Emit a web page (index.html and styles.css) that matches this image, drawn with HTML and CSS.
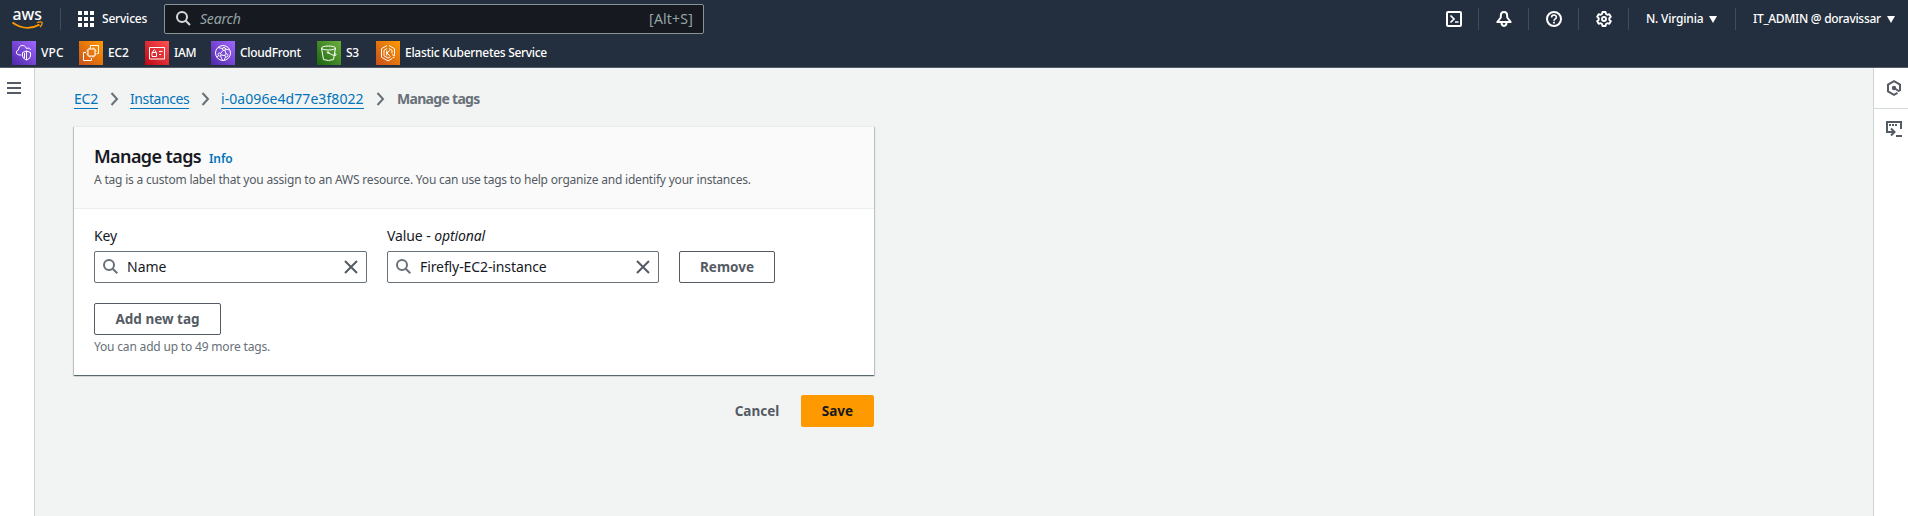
FILE: index.html
```html
<!DOCTYPE html>
<html lang="en">
<head>
<meta charset="utf-8">
<title>Manage tags | EC2</title>
<link rel="stylesheet" href="styles.css">
</head>
<body>
<header class="header">
  <div class="topbar">
    <svg class="logo" width="32" height="22" viewBox="0 0 32 22"><text class="logo-text" x="0.5" y="11" textLength="29.5" lengthAdjust="spacingAndGlyphs">aws</text><path d="M.5 13.500C9 19.800 19 20.300 27.500 15.600" fill="none" stroke="#f90" stroke-width="1.800"/><path d="M25 13.800c2-1.200 4.500-1 5-.4s-.3 3.200-2 4.700" fill="none" stroke="#f90" stroke-width="1.300"/></svg>
    <span class="rule rule-logo"></span>
    <svg class="grid-icon" width="16" height="16" viewBox="0 0 16 16" fill="#fff"><path d="M0 0h4v4H0zM6 0h4v4H6zM12 0h4v4h-4zM0 6h4v4H0zM6 6h4v4H6zM12 6h4v4h-4zM0 12h4v4H0zM6 12h4v4H6zM12 12h4v4h-4z"/></svg>
    <span class="services">Services</span>
    <div class="search">
      <svg width="16" height="16" viewBox="0 0 16 16" fill="none" stroke="#d5dbdb" stroke-width="2"><circle cx="6" cy="6" r="5"/><path d="M9.700 9.700L14 14"/></svg>
      <span class="search-text">Search</span>
      <span class="shortcut">[Alt+S]</span>
    </div>
    <div class="tools">
      <span class="tool"><svg width="16" height="16" viewBox="0 0 16 16" fill="none" stroke="#fff" stroke-width="2"><rect x="1" y="1" width="14" height="14" rx="1"/><path d="M4.500 4.500L8 8l-3.500 3.500M9 11h3.500" stroke-width="1.700"/></svg></span>
      <span class="tool"><svg width="16" height="16" viewBox="0 0 16 16" fill="none" stroke="#fff" stroke-width="2" stroke-linejoin="round"><path d="M8 1C5.800 1 4.800 2.800 4.800 5v1.500L1.300 11h13.400l-3.500-4.500V5C11.200 2.800 10.200 1 8 1zM5.500 11.500C5.500 16 10.500 16 10.500 11.500"/></svg></span>
      <span class="tool"><svg width="16" height="16" viewBox="0 0 16 16" fill="none" stroke="#fff" stroke-width="2"><circle cx="8" cy="8" r="7"/><path d="M5.600 6.400C5.600 3.200 10.400 3.200 10.400 6.200 10.400 8 8 7.800 8 9.800" stroke-width="1.600"/><path d="M8 10.800v1.800" stroke-width="1.800"/></svg></span>
      <span class="tool"><svg width="16" height="16" viewBox="0 0 16 16" fill="none" stroke="#fff" stroke-width="1.900" stroke-linejoin="round"><path d="M6.500 1h3l.5 2 1.300.8 2-.6 1.500 2.600L13.300 7.200v1.600l1.500 1.400-1.500 2.600-2-.6L10 13l-.5 2h-3L6 13l-1.300-.8-2 .6-1.500-2.600 1.500-1.400V7.200L1.200 5.800l1.500-2.600 2 .6L6 3z"/><circle cx="8" cy="8" r="2"/></svg></span>
      <span class="menu menu-region"><span class="region">N. Virginia</span><i class="caret"></i></span>
      <span class="menu menu-account"><span class="account">IT_ADMIN @ doravissar</span><i class="caret"></i></span>
    </div>
  </div>
  <nav class="favorites">
    <a class="fav fav-vpc"><svg class="tile purple" viewBox="0 0 24 24"><path d="M9.500 14H8C3.500 14 3.500 9.500 6.500 9 6.500 3.500 13 3 14.500 7.500 17 6.500 18.500 7.500 18.500 9M14.500 10l4 1.500v3.500q0 2.500-4 4-4-1.500-4-4v-3.500zM14.500 10v9M12.500 12v5"/></svg><span>VPC</span></a>
    <a class="fav fav-ec2"><svg class="tile orange" viewBox="0 0 24 24"><path d="M9 8h7v7H9zM11 8V6.500M14 8V6.500M11 16.500V15M14 16.500V15M7.500 10H9M7.500 13H9M16 10h1.500M16 13h1.500M11.500 7V4.500h8v8H18M7 11.500H4.500v8h8V17"/></svg><span>EC2</span></a>
    <a class="fav fav-iam"><svg class="tile red" viewBox="0 0 24 24"><path d="M4.500 6.500h15v11.500h-15zM7 11.500h4.500v4H7zM8 11.500V10q1.300-2.500 2.600 0v1.500M14 10.500h3.500M14 13.500h2"/></svg><span>IAM</span></a>
    <a class="fav fav-cf"><svg class="tile purple" viewBox="0 0 24 24"><circle cx="12" cy="12" r="7.500"/><circle cx="13" cy="8" r="1.500"/><circle cx="8.500" cy="13.500" r="1.500"/><circle cx="15.500" cy="14.500" r="1.500"/><path d="M12 9.500l-2.500 3M14 9.300l1.200 3.700M10 14l4 .5M7 6.500l4.500 1M14.500 8l4 1M6 16.500l1.500-2M9.500 15l2 4.300M14.500 16l-1.500 3.500"/></svg><span>CloudFront</span></a>
    <a class="fav fav-s3"><svg class="tile green" viewBox="0 0 24 24"><ellipse cx="11.500" cy="7" rx="7" ry="2"/><path d="M4.500 7l2 11.500q5 2 10 0L18.500 7M11 11.500q4 3 7.500 3 2-.7-1-2.500"/><circle cx="11" cy="11.500" r=".8"/></svg><span>S3</span></a>
    <a class="fav fav-eks"><svg class="tile orange" viewBox="0 0 24 24"><path d="M11 4.500L5.500 7.700v8.500l6.500 3.700 4-2.300M13 4.500l5.500 3.200v7L16 13.500M11 7.500L8 9.200v5.600l4 2.300 2.500-1.500M13 7.500l3 1.700v3M10.700 9.500v5M13.800 9.500l-3 2.500 3 2.800M16.500 17l2-1"/></svg><span>Elastic Kubernetes Service</span></a>
  </nav>
</header>
<div class="shell">
  <aside class="side-nav"><svg width="14" height="12" viewBox="0 0 14 12" fill="#545b64"><path d="M0 0h14v2H0zM0 5h14v2H0zM0 10h14v2H0z"/></svg></aside>
  <main class="content">
    <nav class="crumbs">
      <a class="crumb c1">EC2</a>
      <svg class="chev" viewBox="0 0 9 14"><path d="M1.500 1l5.500 6-5.500 6"/></svg>
      <a class="crumb c2">Instances</a>
      <svg class="chev" viewBox="0 0 9 14"><path d="M1.500 1l5.500 6-5.500 6"/></svg>
      <a class="crumb c3">i-0a096e4d77e3f8022</a>
      <svg class="chev" viewBox="0 0 9 14"><path d="M1.500 1l5.500 6-5.500 6"/></svg>
      <span class="here">Manage tags</span>
    </nav>
    <section class="card">
      <div class="card-head">
        <div class="title-row"><h1 class="title">Manage tags</h1><a class="info">Info</a></div>
        <p class="desc">A tag is a custom label that you assign to an AWS resource. You can use tags to help organize and identify your instances.</p>
      </div>
      <div class="card-body">
        <div class="tag-row">
          <div class="field">
            <label class="label">Key</label>
            <div class="input"><svg width="16" height="16" viewBox="0 0 16 16"><circle cx="6" cy="6" r="5"/><path d="M9.700 9.700L14.300 14.300"/></svg><span class="value v-key">Name</span><svg class="clear" width="14" height="14" viewBox="0 0 14 14"><path d="M1 1l12 12M13 1L1 13"/></svg></div>
          </div>
          <div class="field">
            <label class="label v-label">Value - <em>optional</em></label>
            <div class="input"><svg width="16" height="16" viewBox="0 0 16 16"><circle cx="6" cy="6" r="5"/><path d="M9.700 9.700L14.300 14.300"/></svg><span class="value v-val">Firefly-EC2-instance</span><svg class="clear" width="14" height="14" viewBox="0 0 14 14"><path d="M1 1l12 12M13 1L1 13"/></svg></div>
          </div>
          <button class="btn remove">Remove</button>
        </div>
        <button class="btn add">Add new tag</button>
        <p class="hint">You can add up to 49 more tags.</p>
      </div>
    </section>
    <div class="actions"><button class="btn cancel">Cancel</button><button class="btn save">Save</button></div>
  </main>
  <aside class="tools-panel">
    <div class="panel-item"><svg width="16" height="16" viewBox="0 0 16 16" fill="none" stroke="#545b64" stroke-width="2"><path d="M14 11V4.500L8 1.200 2 4.500v7l6 3.300 3.500-2M8 8l5.500 3.500"/><circle cx="8" cy="8" r="1.200" fill="#545b64"/></svg></div>
    <div class="panel-item shell-item"><svg width="16" height="16" viewBox="0 0 16 16" fill="none" stroke="#545b64" stroke-width="2"><path d="M15 8V1H1v10h7M5 7.500L8.500 11 5 14.500M10 15h6"/><path d="M3 4h2M6 4h2M9 4h2"/></svg></div>
  </aside>
</div>
</body>
</html>
```
FILE: styles.css
```css
* { box-sizing: border-box; }
body { margin: 0; height: 516px; overflow: hidden; display: flex; flex-direction: column; background: #f2f3f3; color: #16191f; font: 14px/22px "Noto Sans", "Open Sans", sans-serif; }
svg { display: block; flex: none; }
h1, p { margin: 0; }
button { font: inherit; }

.header { flex: none; height: 68px; background: #232f3e; border-bottom: 1px solid #545b64; color: #fff; font-size: 12px; font-weight: 500; }
.topbar { height: 38px; display: flex; align-items: center; white-space: nowrap; }
.logo { margin: 1px 0 0 12px; overflow: visible; }
.logo-text { font: 500 16px "Noto Sans", sans-serif; fill: #fff; }
.rule { width: 1px; height: 22px; background: #414d5c; }
.rule-logo { margin-left: 16px; }
.grid-icon { margin-left: 17px; }
.services { width: 54px; margin-left: 8px; letter-spacing: -.2px; }
.search { width: 540px; height: 30px; margin-left: 8px; padding: 0 10px 0 11px; display: flex; align-items: center; background: #161920; border: 1px solid #879596; border-radius: 2px; font-size: 14px; font-weight: 400; color: #95a5a6; }
.search-text { margin-left: 8px; font-style: italic; letter-spacing: -.2px; }
.shortcut { margin-left: auto; letter-spacing: .2px; }
.tools { margin-left: auto; display: flex; align-items: center; }
.tool { width: 50px; height: 22px; padding-right: 16px; display: flex; align-items: center; justify-content: flex-end; border-right: 1px solid #414d5c; }
.menu { height: 22px; display: flex; align-items: center; justify-content: space-between; }
.menu-region { width: 107px; padding: 0 18px 0 17px; border-right: 1px solid #414d5c; }
.menu-account { width: 172px; padding: 0 13px 0 17px; }
.region { letter-spacing: -.2px; }
.account { letter-spacing: -.3px; }
.caret { border: 4px solid transparent; border-top: 7px solid #fff; border-bottom: 0; }
.favorites { display: flex; padding: 3px 0 0 12px; }
.fav { height: 24px; display: flex; align-items: center; gap: 5px; white-space: nowrap; letter-spacing: -.3px; }
.fav-vpc { width: 67px; letter-spacing: .1px; }
.fav-ec2, .fav-iam { width: 66px; }
.fav-ec2 { letter-spacing: -.1px; }
.fav-cf { width: 106px; }
.fav-s3 { width: 59px; }
.tile { width: 24px; height: 24px; fill: none; stroke: #fff; stroke-width: 1; }
.purple { background: linear-gradient(45deg, #4d27a8, #a166ff); }
.orange { background: linear-gradient(45deg, #c8511b, #f90); }
.red { background: linear-gradient(45deg, #bd0816, #ff5252); }
.green { background: linear-gradient(45deg, #1b660f, #6cae3e); }

.shell { flex: 1; display: flex; min-height: 0; }
.side-nav { width: 35px; padding: 14px 0 0 7px; background: #fff; border-right: 1px solid #d0d4d5; }
.content { flex: 1; padding: 20px 0 0 39px; }
.crumbs { display: flex; align-items: flex-start; height: 22px; white-space: nowrap; }
.crumb { height: 21px; color: #0073bb; border-bottom: 1px solid #0073bb; }
.c1 { width: 24px; letter-spacing: -.2px; }
.c2 { width: 59px; letter-spacing: -.4px; }
.c3 { width: 143px; letter-spacing: .07px; }
.chev { width: 9px; height: 14px; margin: 4px 11px 0 12px; fill: none; stroke: #687078; stroke-width: 2; }
.here { margin-left: 1px; color: #687078; font-weight: 700; letter-spacing: -.7px; }
.card { width: 800px; height: 249px; margin-top: 16px; background: #fff; border-top: 1px solid #eaeded; box-shadow: 0 1px 1px 0 rgba(0,28,36,.5), 1px 1px 1px 0 rgba(0,28,36,.15), -1px 1px 1px 0 rgba(0,28,36,.15); }
.card-head { height: 82px; padding: 18px 20px 0; background: #fafafa; border-bottom: 1px solid #eaeded; white-space: nowrap; }
.title-row { display: flex; align-items: baseline; height: 22px; }
.title { width: 115px; font-size: 18px; line-height: 22px; font-weight: 600; letter-spacing: -.6px; }
.info { color: #0073bb; font-size: 12px; font-weight: 600; letter-spacing: -.1px; }
.desc { margin-top: 2px; font-size: 12px; color: #545b64; letter-spacing: -.2px; }
.card-body { padding: 16px 20px; }
.tag-row { display: flex; gap: 20px; align-items: flex-end; }
.field { width: 273px; }
.field + .field { width: 272px; }
.label { display: block; height: 26px; white-space: pre; letter-spacing: -.1px; }
.input { height: 32px; display: flex; align-items: center; padding: 0 8px; border: 1px solid #687078; border-radius: 2px; }
.input svg { fill: none; stroke: #687078; stroke-width: 2; }
.value { margin-left: 8px; }
.v-val { letter-spacing: -.1px; }
.clear { margin-left: auto; }
.input .clear { stroke: #545b64; }
.btn { display: block; height: 32px; padding: 0; background: #fff; border: 1px solid #545b64; border-radius: 2px; color: #545b64; font-size: 13.500px; font-weight: 700; line-height: 22px; letter-spacing: 0; }
.remove { width: 96px; }
.add { width: 127px; margin-top: 20px; }
.hint { margin-top: 1px; font-size: 12px; color: #687078; letter-spacing: -.18px; }
.actions { width: 800px; margin-top: 20px; display: flex; justify-content: flex-end; }
.cancel { width: 88px; background: none; border-color: transparent; }
.save { width: 73px; background: #f90; border-color: #f90; color: #16191f; }
.tools-panel { width: 35px; background: #fff; border-left: 1px solid #d0d4d5; }
.panel-item { height: 41px; padding: 12px 0 0 12px; border-bottom: 1px solid #d5dbdb; }
.shell-item { border-bottom: 0; }
```
